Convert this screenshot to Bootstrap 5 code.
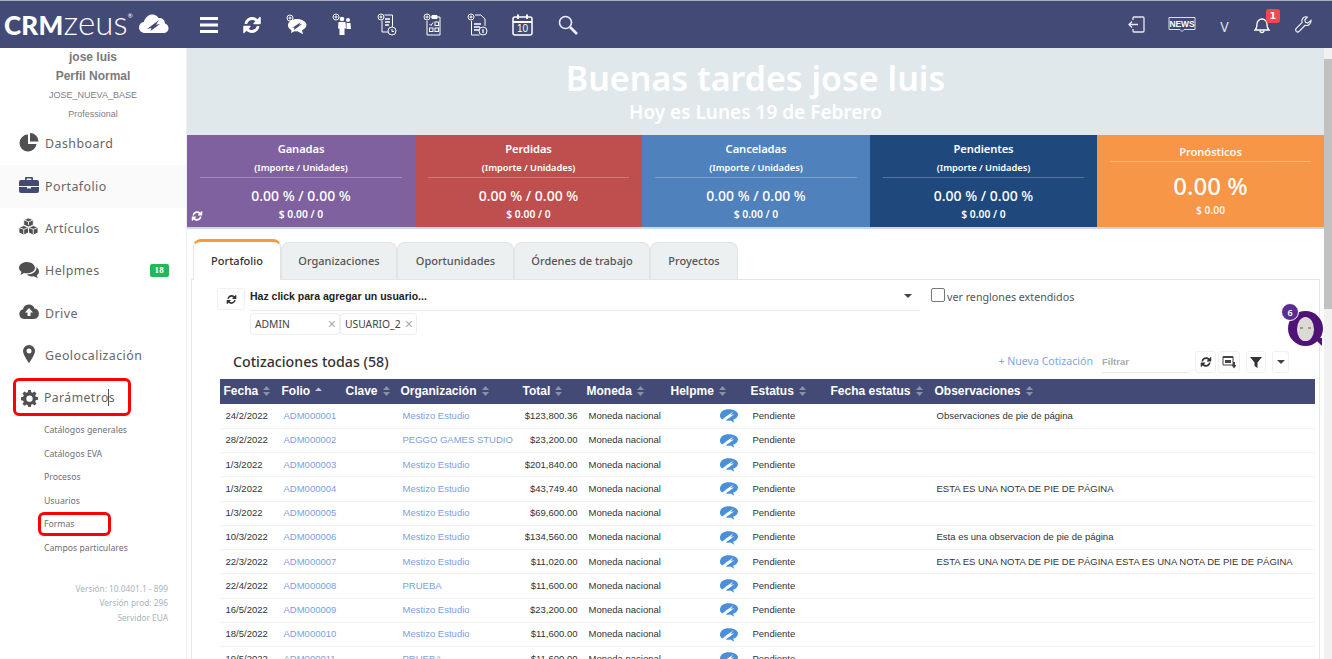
<!DOCTYPE html>
<html lang="es">
<head>
<meta charset="utf-8">
<title>CRM Zeus</title>
<link href="https://cdn.jsdelivr.net/npm/bootstrap@5.3.0/dist/css/bootstrap.min.css" rel="stylesheet">
<style>
html,body{height:100%;overflow:hidden;background:#fff}
body{font-family:"Noto Sans",sans-serif;color:#555}
.z-app{height:659px;display:flex;flex-direction:column;position:relative;overflow:hidden}
.z-top{height:48px;flex:none;background:#434a75;border-top:1px solid #a9acbd;padding:0 8px 0 0;flex-wrap:nowrap}
.z-brand{width:187px;height:47px;flex:none;display:flex;align-items:center;padding-left:4px;color:#fff;font-family:"Lato",sans-serif;font-size:26px;line-height:1;margin:0}
.z-brand b{font-weight:900;letter-spacing:.2px}.z-brand span{font-weight:300;font-size:33px;letter-spacing:.2px;margin-top:-5px;margin-left:0}
.z-brand sup{font-size:6px;top:-1.500em;position:relative;margin-left:0;width:6px}
.z-brand svg{margin-left:3px;margin-top:-4px}
.z-ico{width:45.2px;height:47px;display:flex;align-items:center;justify-content:center;color:#fff;flex:none}
.z-ico svg{display:block}
.z-r{width:42px;position:relative}
.z-v{font-size:14px;color:#dfe1ea;margin-top:3px}
.z-not{position:absolute;left:24px;top:8px;background:#f2494f;color:#fff;font:700 9px/14px "DejaVu Sans",sans-serif;width:14px;height:14px;text-align:center;border-radius:3px;padding:0}
.z-body{display:flex;flex:1;min-height:0}
.z-side{width:187px;flex:none;border-right:1px solid #eceff1;background:#fff}
.z-prof{height:75px;text-align:center;font-family:"Liberation Sans",sans-serif;color:#7a7a7a;line-height:19px}
.z-prof b{display:block;font-size:12px}
.z-prof i{display:block;font-style:normal;font-size:9px;color:#808080}
.z-nav{flex-direction:column;flex-wrap:nowrap}
.z-nav .nav-link{height:42.3px;display:flex;align-items:center;color:#666;font-size:12.400px;letter-spacing:.45px;padding:1px 17px 0 19px;position:relative}
.z-nav .z-act{background:#fafafa}
.z-nav svg{width:20px;height:20px;margin-right:6px;flex:none;color:#505050;margin-top:-4px}
.z-green{margin-left:auto;background:#25b956;color:#fff;font:700 9px/11px "Liberation Serif",serif;padding:1px 5px;border-radius:2px;margin-top:-3px;letter-spacing:.2px}
.z-sub{list-style:none;margin:0;padding:0 0 0 44px}
.z-sub li{height:23.6px;line-height:23.6px;font-size:8.700px;color:#6c6f7b;white-space:nowrap}
.z-ver{text-align:right;padding:21px 18px 0 0;font-size:8.300px;line-height:14.500px;color:#a9b4bb}
.z-main{flex:1;min-width:0;display:flex;flex-direction:column}
.z-greet{height:87px;flex:none;background:#e1e8eb;color:#fff;text-align:center;padding-top:8px}
.z-greet h1{font-size:34px;line-height:44px;font-weight:600;margin:0}
.z-greet p{font-size:19px;line-height:24px;margin:0;font-weight:600}
.z-kpis{display:grid;grid-template-columns:228px 227px 228px 227px 227px;height:94px;flex:none;border-bottom:2px solid #ced8de}
.z-kpi{color:#fff;text-align:center;padding:5px 13px 0;height:92px;position:relative;line-height:1.2}
.z-k1{background:#8061a0}.z-k2{background:#bf4f4f}.z-k3{background:#4f81bd}.z-k4{background:#1f497d}.z-k5{background:#f79646;padding-top:8px}
.z-kt{font-size:11.200px;font-weight:600;line-height:18px;letter-spacing:-.1px}
.z-ks{font-size:9.300px;font-weight:600;line-height:20px;border-bottom:1px solid rgba(255,255,255,.25);height:20px;margin-bottom:8px;letter-spacing:-.05px}
.z-k5 .z-kt{border-bottom:1px solid rgba(255,255,255,.35);height:19px;margin-bottom:8px;opacity:.95}
.z-kb{font-size:14px;font-weight:500;line-height:20px}
.z-k5 .z-kb{font-size:24px;line-height:34px;margin-top:-1px}
.z-kn{font-size:10.300px;font-weight:600;line-height:16px}
.z-k5 .z-kn{margin-top:-3px;line-height:20px;opacity:.9}
.z-kr{position:absolute;left:4px;bottom:5px;width:12px;height:12px;color:#fff}
.z-content{padding:10px 4px 0}
.z-tabs{--bs-nav-tabs-border-color:#dfe5e8;padding-left:2px;flex-wrap:nowrap;align-items:flex-end;border-bottom:1px solid #dfe5e8;margin:0}
.z-tabs .nav-link{height:37px;padding:0;display:flex;align-items:center;justify-content:center;background:#edf0f1;border:1px solid #dfe5e8;border-bottom:0;color:#555;font-size:11px;font-weight:500;border-radius:8px 8px 0 0;margin:0}
.z-tabs .nav-link.active{background:#fff;border-top:3px solid #f89a37;border-left-color:#e4e8ea;color:#333;margin-bottom:-1px;height:41px}
.z-w1{width:88px}.z-w2{width:116px}.z-w3{width:117px}.z-w4{width:136px}.z-w5{width:88px}
.z-panel{border:1px solid #e3e8eb;border-top:0;padding:8px 4px 0 25px;width:1129px;height:400px;overflow:hidden}
.z-rowu{display:flex;align-items:flex-start}
.z-rbtn{width:28px;height:22px;border:1px solid #eef0f2;border-radius:3px;display:flex;align-items:center;justify-content:center;color:#333;background:#fff;padding:0;flex:none}
.z-rbtn svg{width:11px;height:11px}
.z-sel{margin-left:5px;width:670px;flex:none}
.z-sel-in{height:23px;border-bottom:1px solid #e9ecee;display:flex;justify-content:space-between;align-items:center;font:700 10.500px "Liberation Sans",sans-serif;color:#222;padding:0 8px 7px 0}
.z-caret{width:0;height:0;border:4px solid transparent;border-top-color:#444;border-bottom:0;display:block}
.z-tags{display:flex;margin-top:2px}
.z-tag{height:22px;border:1px solid #eceff1;border-radius:3px;font-size:10.300px;color:#444;display:flex;align-items:center;justify-content:space-between;padding:0 3px 0 4px;line-height:1}
.z-tag span{color:#aaa;font-size:14px;font-family:"Liberation Sans",sans-serif}
.z-t1{width:90px}.z-t2{width:77px}
.z-chk{display:flex;align-items:flex-start;margin:0 0 0 11px;font-size:10.700px;color:#555;line-height:18px}
.z-chk .form-check-input{width:14px;height:14px;margin:0 2px 0 0;border:1px solid #777;border-radius:2px;flex:none}
.z-head{display:flex;align-items:center;height:25px;margin:14px 26px 0 0}
.z-head h2{font-size:14.200px;font-weight:500;color:#333;margin:0 0 0 16px;line-height:25px}
.z-new{margin-left:auto;color:#7ea6e0;font-size:10.600px;text-decoration:none;line-height:25px}
.z-fil{width:87px;height:21px;border:0;border-bottom:1px solid #e3e8eb;font:700 9.500px "Liberation Sans",sans-serif;margin:1px 6px 0 9px;color:#aaa;padding:0;background:transparent;display:flex;align-items:center;border-radius:0}
.z-fil::placeholder{color:#aaa}
.z-tb{height:22px;width:21px;border:1px solid #eef0f2;border-radius:3px;padding:0;display:flex;align-items:center;justify-content:center;background:#fff;color:#333;margin-right:2px}
.z-tb svg{width:12px;height:12px}
.z-gap{margin-left:4px}
.z-tablewrap{margin-top:5px;width:1095px;margin-left:2.500px}
.z-table{table-layout:fixed;width:1095px;margin:0;font-family:"Liberation Sans",sans-serif;font-size:9.500px;color:#333;--bs-table-bg:transparent}
.z-table th{background:#434a75;color:#fff;font-size:12px;font-weight:700;height:25px;padding:0 0 1px 4px;white-space:nowrap;border-bottom:0;vertical-align:middle}
.z-table td{height:24.250px;padding:0 0 0 6px;vertical-align:middle;white-space:nowrap;border-bottom:1px solid #f0f1f2;color:#333;overflow:visible}
.z-table a:not([href]):not([class]){color:#7a9fe3;text-decoration:none}
.z-table td.z-tot{text-align:right;padding:0 5px 0 0}
.z-table td.z-hlp{text-align:right;padding:0 9px 0 0}
.z-hlp svg{width:18px;height:14px;display:inline-block;vertical-align:middle}
.z-so{display:inline-block;width:7px;height:10px;margin-left:5px;vertical-align:-1px;opacity:.55}
.z-so.z-up{opacity:.8}
.z-scroll{width:8px;flex:none;background:#f1f1f1;position:relative}
.z-thumb{position:absolute;top:11px;left:0;right:0;height:250px;background:#c1c1c1}
.z-redb{position:absolute;border:3px solid #f00;border-radius:6px;pointer-events:none}
.z-red1{left:13px;top:378px;width:118px;height:38px}
.z-red2{left:38px;top:512px;width:73px;height:24px}
.z-cursor{position:absolute;left:108px;top:389px;width:1px;height:17px;background:#555}
.z-bot{position:absolute;left:1288px;top:311px;width:35px;height:35px;border-radius:50%;background:#4f1377;display:flex;align-items:center;justify-content:center}
.z-bot:after{content:"";position:absolute;right:1px;bottom:0;border:4px solid transparent;border-top-color:#4f1377;border-right-color:#4f1377}
.z-face{width:17px;height:24px;border-radius:50% 50% 48% 48%;background:#dcdad5;position:relative}
.z-face:before{content:"";position:absolute;left:3px;right:3px;top:10px;height:2px;border-left:3px solid #999;border-right:3px solid #999}
.z-botn{position:absolute;left:1281px;top:303px;width:18px;height:18px;border-radius:50%;background:#5c2d91;border:1px solid #fff;color:#fff;font-size:9px;font-weight:600;display:flex;align-items:center;justify-content:center;padding:0;z-index:2}
</style>
</head>
<body>
<svg width="0" height="0" class="position-absolute">
<defs>
<symbol id="sync" viewBox="0 0 24 24"><path fill="currentColor" d="M3.200 10.200C4 5.600 7.700 2.400 12.200 2.400c2.500 0 4.700 1 6.400 2.600l2.600-2.600c.5-.5 1.300-.1 1.300.6v7.200c0 .5-.4.9-.9.9h-7.200c-.7 0-1.100-.8-.6-1.300l2.200-2.200c-1-.9-2.400-1.500-3.800-1.500-2.800 0-5.100 1.800-5.900 4.400-.1.2-.3.4-.6.4H3.600c-.3 0-.5-.3-.4-.7zM20.800 13.800c-.8 4.600-4.500 7.800-9 7.800-2.500 0-4.700-1-6.400-2.600L2.800 21.600c-.5.5-1.300.1-1.300-.6v-7.200c0-.5.4-.9.9-.9h7.200c.7 0 1.100.8.6 1.300l-2.200 2.200c1 .9 2.400 1.500 3.800 1.500 2.800 0 5.100-1.800 5.900-4.400.1-.2.3-.4.6-.4h2.100c.3 0 .5.3.4.7z"/></symbol>
<symbol id="hlp" viewBox="0 0 24 18"><path fill="#4a90d9" d="M11 0C5 0 .5 3 0 8c-.3 2.500 1 4.500 3 5.500L10 9l-2 6c2 .5 4 .5 6 0l5 3-1.500-4c3.500-1 6.500-3.500 6.500-7C24 2.500 17 0 11 0z"/><path fill="#fff" d="M18 3 4.500 12l4.500-2-1 4.500L19 6.500l-5 1.300z"/></symbol>
<symbol id="sortb" viewBox="0 0 7 10"><path fill="#c9cbd6" d="M3.500 0 7 4H0zM3.500 10 0 6h7z"/></symbol>
<symbol id="sortu" viewBox="0 0 7 10"><path fill="#e6e7ee" d="M3.500 1.500 7 5H0z"/></symbol>
</defs>
</svg>
<div class="z-app">
  <nav class="navbar z-top d-flex justify-content-start">
    <a class="z-brand text-decoration-none"><b>CRM</b><span>zeus</span><sup>®</sup>
      <svg width="33" height="22" viewBox="0 0 31 22"><path fill="#fff" d="M7 21C3.500 21 1 18.500 1 15.500c0-2.800 2-5 4.800-5.400C7 6 10 3 13.500 2.500c3-.5 5.500 1 7 3.500 4-.5 6.500 2.500 6.500 5.500 2.200.7 3.500 2.500 3.500 4.700 0 2.800-2.200 4.800-5 4.800z"/><path fill="#434a75" d="M21 8 9 17l4.500-1-1 3 9.500-7-4 .8z"/></svg>
    </a>
    <div class="z-ico"><svg width="19" height="16" viewBox="0 0 19 16"><path fill="#fff" d="M0 0h18v3H0zM0 6.500h18v3H0zM0 13h18v3H0z"/></svg></div>
    <div class="z-ico" style="margin-left:-3px"><svg width="20" height="20"><use href="#sync"/></svg></div>
    <div class="z-ico"><svg width="24" height="22" viewBox="0 0 24 22"><circle cx="5" cy="4" r="3" fill="none" stroke="#fff" stroke-width="1"/><path stroke="#fff" d="M3.500 4h3M5 2.500v3"/><path fill="#fff" d="M12 5c-5 0-9 2.500-9 6.500 0 2 1.500 3.700 3.500 4.700L6 19l3.500-1.700c1 .2 2 .2 3 0l5.500 3-1-4c2.500-1 4.500-3 4.500-5.500C21 7.500 17 5 12 5z"/><path fill="#434a75" d="M16 8 7 14l2.500-.5-.5 2.500 8-6-3 .5z"/></svg></div>
    <div class="z-ico"><svg width="22" height="23" viewBox="0 0 22 23"><circle cx="5" cy="4" r="3" fill="none" stroke="#fff"/><path stroke="#fff" d="M3.500 4h3M5 2.500v3"/><g fill="#fff"><circle cx="11" cy="6" r="2.300"/><circle cx="17" cy="7" r="2"/><path d="M7.500 9h7l.5 6.500h-1.500V22h-5v-6.500H7zM15.500 10h4l.5 6h-4.500z"/></g></svg></div>
    <div class="z-ico"><svg width="20" height="23" viewBox="0 0 20 23" fill="none" stroke="#fff"><circle cx="4" cy="4" r="3"/><path d="M2.500 4h3M4 2.500v3M7.500 2h8v12M5 7.500V19h6"/><path d="M8 6h5M8 9h5M8 12h4" stroke-width="1.300"/><circle cx="15" cy="18" r="4"/><path d="M15 16v2.500h2"/></svg></div>
    <div class="z-ico"><svg width="20" height="23" viewBox="0 0 20 23" fill="none" stroke="#fff"><circle cx="4" cy="4" r="3"/><path d="M2.500 4h3M4 2.500v3M8 4h9v18H4V8"/><path fill="#fff" d="M9 2.500h5v3H9z"/><rect x="6.500" y="15" width="3.500" height="3.500"/><rect x="12" y="15" width="3.500" height="3.500"/><path d="M6.500 11l1.500 1.500 2-3"/><rect x="12" y="9" width="3.500" height="3.500"/></svg></div>
    <div class="z-ico"><svg width="21" height="23" viewBox="0 0 21 23" fill="none" stroke="#fff"><circle cx="4" cy="4" r="3"/><path d="M2.500 4h3M4 2.500v3M8 2h6l4 4v7M4.500 8v14h8"/><path d="M7 11h7M7 14h6M7 17h5" stroke-width="1.400"/><circle cx="16" cy="18" r="4"/><path d="M16 16v4" stroke-width="1.300"/></svg></div>
    <div class="z-ico"><svg width="21" height="22" viewBox="0 0 21 22" fill="none" stroke="#fff" stroke-width="1.500"><rect x="1" y="3" width="19" height="18" rx="2"/><path d="M1 8h19" stroke-width="2"/><path d="M6 .5V5M15 .5V5" stroke-width="2"/><text x="10.500" y="18" fill="#fff" stroke="none" font-size="10" font-family="Liberation Sans" text-anchor="middle">10</text></svg></div>
    <div class="z-ico"><svg width="20" height="20" viewBox="0 0 20 20" fill="none" stroke="#eef" ><circle cx="7.500" cy="7.500" r="6" stroke-width="1.600"/><path d="M12 12l7 7" stroke-width="2.600"/></svg></div>
    <div class="d-flex ms-auto align-items-center">
      <div class="z-ico z-r"><svg width="17" height="17" viewBox="0 0 17 17" fill="none" stroke="#e8e9f0" stroke-width="1.300"><path d="M5 4V2a1 1 0 0 1 1-1h9a1 1 0 0 1 1 1v13a1 1 0 0 1-1 1H6a1 1 0 0 1-1-1v-2"/><path d="M1 8.500h9M4 5.500l-3 3 3 3"/></svg></div>
      <div class="z-ico z-r" style="width:50px"><svg width="28" height="17" viewBox="0 0 28 17"><path fill="none" stroke="#dfe1ea" d="M1 1.500h26v12H16l-2 2-2-2H1z"/><text x="14" y="11" fill="#fff" font-family="Liberation Sans" font-weight="700" font-size="8.400" text-anchor="middle">NEWS</text></svg></div>
      <div class="z-ico z-r" style="width:35px"><span class="z-v">V</span></div>
      <div class="z-ico z-r" style="width:40px"><svg width="16" height="18" viewBox="0 0 16 18" fill="none" stroke="#fff" stroke-width="1.300"><path d="M1 14c2-1.500 2-3 2-6a5 5 0 0 1 10 0c0 3 0 4.500 2 6z"/><path d="M6 14.500a2 2 0 0 0 4 0"/></svg><span class="badge z-not">1</span></div>
      <div class="z-ico z-r" style="width:42px"><svg width="17" height="17" viewBox="0 0 17 17" fill="none" stroke="#eceef4" stroke-width="1.200"><path d="M16 4.500 12.800 7 10.500 6.300 9.800 4 12.300 1.100C10 .2 7.500 1.500 7 3.800c-.2 1-.1 1.800.2 2.600L1.300 12.400c-.8.800-.8 2 0 2.900.8.800 2 .8 2.800 0l6-6c2.800.9 6.200-1.500 5.900-4.800z"/></svg></div>
    </div>
  </nav>
  <div class="z-body">
    <aside class="z-side">
      <div class="z-prof"><b>jose luis</b><b>Perfil Normal</b><i>JOSE_NUEVA_BASE</i><i>Professional</i></div>
      <nav class="nav z-nav">
        <a class="nav-link"><svg viewBox="0 0 20 20"><path fill="currentColor" d="M9 1.500a8.500 8.500 0 1 0 8.500 9.500H9zM11 0v8.500h8.500A8.500 8.500 0 0 0 11 0z"/></svg>Dashboard</a>
        <a class="nav-link z-act"><svg viewBox="0 0 20 20"><path fill="#434a75" d="M7 2h6a1 1 0 0 1 1 1v2h4a2 2 0 0 1 2 2v4H0V7a2 2 0 0 1 2-2h4V3a1 1 0 0 1 1-1zm.700 1.500V5h4.600V3.500zM0 12h8v1.500h4V12h8v4a2 2 0 0 1-2 2H2a2 2 0 0 1-2-2z"/></svg>Portafolio</a>
        <a class="nav-link" style="padding-left:18px"><svg viewBox="0 0 22 20" style="width:21px;margin-right:6px"><g fill="currentColor" stroke="#fff" stroke-width=".9"><path d="M11 .5l5 2v5.500l-5 2-5-2V2.500z"/><path d="M6 8.500l5 2v5.500l-5 2.500L1 16v-5.500z"/><path d="M16 8.500l5 2v5.500l-5 2.500-5-2.500v-5.500z"/><path fill="none" d="M6 2.500l5 2 5-2M1 10.500l5 2 5-2 5 2 5-2M11 4.500V8M6 12.500V18M16 12.500V18"/></g></svg>Artículos</a>
        <a class="nav-link"><svg viewBox="0 0 20 20"><path fill="currentColor" d="M8 2C3.600 2 0 4.600 0 7.800c0 1.700 1 3.200 2.500 4.200L1.500 15l3.500-2c1 .2 2 .3 3 .3 4.400 0 8-2.500 8-5.500S12.400 2 8 2z"/><path fill="currentColor" d="M17.500 7.500c.1 3.800-4 7-9 7H7.600C9 15.700 11 16.500 13 16.500c.6 0 1.200-.1 1.800-.2l4 2-1-3c1.300-.9 2.200-2.200 2.200-3.800 0-1.800-1-3.400-2.500-4.500z"/></svg>Helpmes<span class="badge z-green">18</span></a>
        <a class="nav-link"><svg viewBox="0 0 20 20"><path fill="currentColor" d="M5 17a5 5 0 0 1-1-9.800A6 6 0 0 1 15.500 6.500 5.300 5.300 0 0 1 15 17z"/><path fill="#fff" d="M10 6l4 4.500h-2.500V14h-3v-3.500H6z"/></svg>Drive</a>
        <a class="nav-link"><svg viewBox="0 0 20 20"><path fill="currentColor" fill-rule="evenodd" d="M10 1a6 6 0 0 0-6 6c0 4 6 12 6 12s6-8 6-12a6 6 0 0 0-6-6zm0 3.500a2.500 2.500 0 1 1 0 5 2.500 2.500 0 0 1 0-5z"/></svg>Geolocalización</a>
        <a class="nav-link" style="font-size:12.200px;padding-left:21px"><svg viewBox="0 0 20 20" style="width:17px;height:17px;margin-right:6px;margin-top:0"><path fill="currentColor" fill-rule="evenodd" d="M8.500 0h3l.5 2.600 1.700.7L16 1.800 18.200 4l-1.500 2.300.7 1.700 2.600.5v3l-2.600.5-.7 1.700 1.500 2.200-2.200 2.200-2.300-1.500-1.700.7-.5 2.700h-3L8 17.800l-1.700-.7L4 18.600 1.800 16.400l1.500-2.200-.7-1.700L0 12V8.500l2.600-.5.7-1.700L1.800 4 4 1.800l2.300 1.500L8 2.600zM10 6.500a3.700 3.700 0 1 0 0 7.400 3.700 3.700 0 0 0 0-7.400z"/></svg>Parámetros</a>
      </nav>
      <ul class="z-sub">
        <li>Catálogos generales</li><li>Catálogos EVA</li><li>Procesos</li><li>Usuarios</li><li>Formas</li><li>Campos particulares</li>
      </ul>
      <div class="z-ver">Versión: 10.0401.1 - 899<br>Versión prod: 296<br>Servidor EUA</div>
    </aside>
    <main class="z-main">
      <div class="z-greet"><h1>Buenas tardes jose luis</h1><p>Hoy es Lunes 19 de Febrero</p></div>
      <div class="z-kpis">
        <div class="z-kpi z-k1"><div class="z-kt">Ganadas</div><div class="z-ks">(Importe / Unidades)</div><div class="z-kb">0.00 % / 0.00 %</div><div class="z-kn">$ 0.00 / 0</div><svg class="z-kr"><use href="#sync"/></svg></div>
        <div class="z-kpi z-k2"><div class="z-kt">Perdidas</div><div class="z-ks">(Importe / Unidades)</div><div class="z-kb">0.00 % / 0.00 %</div><div class="z-kn">$ 0.00 / 0</div></div>
        <div class="z-kpi z-k3"><div class="z-kt">Canceladas</div><div class="z-ks">(Importe / Unidades)</div><div class="z-kb">0.00 % / 0.00 %</div><div class="z-kn">$ 0.00 / 0</div></div>
        <div class="z-kpi z-k4"><div class="z-kt">Pendientes</div><div class="z-ks">(Importe / Unidades)</div><div class="z-kb">0.00 % / 0.00 %</div><div class="z-kn">$ 0.00 / 0</div></div>
        <div class="z-kpi z-k5"><div class="z-kt">Pronósticos</div><div class="z-kb">0.00 %</div><div class="z-kn">$ 0.00</div></div>
      </div>
      <div class="z-content">
        <ul class="nav nav-tabs z-tabs">
          <li class="nav-item"><a class="nav-link active z-w1">Portafolio</a></li>
          <li class="nav-item"><a class="nav-link z-w2">Organizaciones</a></li>
          <li class="nav-item"><a class="nav-link z-w3">Oportunidades</a></li>
          <li class="nav-item"><a class="nav-link z-w4">Órdenes de trabajo</a></li>
          <li class="nav-item"><a class="nav-link z-w5">Proyectos</a></li>
        </ul>
        <div class="z-panel">
          <div class="z-rowu">
            <button class="btn z-rbtn" type="button"><svg><use href="#sync"/></svg></button>
            <div class="z-sel">
              <div class="z-sel-in">Haz click para agregar un usuario...<i class="z-caret"></i></div>
              <div class="z-tags"><div class="z-tag z-t1">ADMIN<span>×</span></div><div class="z-tag z-t2">USUARIO_2<span>×</span></div></div>
            </div>
            <label class="z-chk"><input class="form-check-input" type="checkbox">ver renglones extendidos</label>
          </div>
          <div class="z-head">
            <h2>Cotizaciones todas (58)</h2>
            <a class="z-new">+ Nueva Cotización</a>
            <input class="form-control z-fil" placeholder="Filtrar">
            <button class="btn z-tb" type="button"><svg><use href="#sync"/></svg></button>
            <button class="btn z-tb" type="button" style="width:22px"><svg viewBox="0 0 14 14" style="width:14px;height:14px"><path fill="none" stroke="#444" d="M1 1.500h10v8.500H1z"/><path fill="#444" d="M1 1h10v2H1zM3 5h6v3H3zM11 7h2v3h1.500L12 13.500 9.500 10H11z"/></svg></button>
            <button class="btn z-tb z-gap" type="button" style="width:20px"><svg viewBox="0 0 12 12"><path fill="#333" d="M0 1h12L7.500 6.500V12L4.500 10V6.500z"/></svg></button>
            <button class="btn z-tb z-gap" type="button" style="width:17px;margin-right:0"><i class="z-caret"></i></button>
          </div>
          <div class="z-tablewrap">
            <table class="table z-table">
              <colgroup><col style="width:58px"><col style="width:64px"><col style="width:55px"><col style="width:122px"><col style="width:64px"><col style="width:84px"><col style="width:80px"><col style="width:80px"><col style="width:104px"><col></colgroup>
              <thead><tr>
                <th>Fecha<svg class="z-so"><use href="#sortb"/></svg></th>
                <th>Folio<svg class="z-so z-up"><use href="#sortu"/></svg></th>
                <th>Clave<svg class="z-so"><use href="#sortb"/></svg></th>
                <th>Organización<svg class="z-so"><use href="#sortb"/></svg></th>
                <th>Total<svg class="z-so"><use href="#sortb"/></svg></th>
                <th>Moneda<svg class="z-so"><use href="#sortb"/></svg></th>
                <th>Helpme<svg class="z-so"><use href="#sortb"/></svg></th>
                <th>Estatus<svg class="z-so"><use href="#sortb"/></svg></th>
                <th>Fecha estatus<svg class="z-so"><use href="#sortb"/></svg></th>
                <th>Observaciones<svg class="z-so"><use href="#sortb"/></svg></th>
              </tr></thead>
              <tbody>
                <tr><td>24/2/2022</td><td><a>ADM000001</a></td><td></td><td><a>Mestizo Estudio</a></td><td class="z-tot">$123,800.36</td><td>Moneda nacional</td><td class="z-hlp"><svg><use href="#hlp"/></svg></td><td>Pendiente</td><td></td><td>Observaciones de pie de página</td></tr>
                <tr><td>28/2/2022</td><td><a>ADM000002</a></td><td></td><td><a>PEGGO GAMES STUDIO</a></td><td class="z-tot">$23,200.00</td><td>Moneda nacional</td><td class="z-hlp"><svg><use href="#hlp"/></svg></td><td>Pendiente</td><td></td><td></td></tr>
                <tr><td>1/3/2022</td><td><a>ADM000003</a></td><td></td><td><a>Mestizo Estudio</a></td><td class="z-tot">$201,840.00</td><td>Moneda nacional</td><td class="z-hlp"><svg><use href="#hlp"/></svg></td><td>Pendiente</td><td></td><td></td></tr>
                <tr><td>1/3/2022</td><td><a>ADM000004</a></td><td></td><td><a>Mestizo Estudio</a></td><td class="z-tot">$43,749.40</td><td>Moneda nacional</td><td class="z-hlp"><svg><use href="#hlp"/></svg></td><td>Pendiente</td><td></td><td>ESTA ES UNA NOTA DE PIE DE PÁGINA</td></tr>
                <tr><td>1/3/2022</td><td><a>ADM000005</a></td><td></td><td><a>Mestizo Estudio</a></td><td class="z-tot">$69,600.00</td><td>Moneda nacional</td><td class="z-hlp"><svg><use href="#hlp"/></svg></td><td>Pendiente</td><td></td><td></td></tr>
                <tr><td>10/3/2022</td><td><a>ADM000006</a></td><td></td><td><a>Mestizo Estudio</a></td><td class="z-tot">$134,560.00</td><td>Moneda nacional</td><td class="z-hlp"><svg><use href="#hlp"/></svg></td><td>Pendiente</td><td></td><td>Esta es una observacion de pie de página</td></tr>
                <tr><td>22/3/2022</td><td><a>ADM000007</a></td><td></td><td><a>Mestizo Estudio</a></td><td class="z-tot">$11,020.00</td><td>Moneda nacional</td><td class="z-hlp"><svg><use href="#hlp"/></svg></td><td>Pendiente</td><td></td><td>ESTA ES UNA NOTA DE PIE DE PÁGINA ESTA ES UNA NOTA DE PIE DE PÁGINA</td></tr>
                <tr><td>22/4/2022</td><td><a>ADM000008</a></td><td></td><td><a>PRUEBA</a></td><td class="z-tot">$11,600.00</td><td>Moneda nacional</td><td class="z-hlp"><svg><use href="#hlp"/></svg></td><td>Pendiente</td><td></td><td></td></tr>
                <tr><td>16/5/2022</td><td><a>ADM000009</a></td><td></td><td><a>Mestizo Estudio</a></td><td class="z-tot">$23,200.00</td><td>Moneda nacional</td><td class="z-hlp"><svg><use href="#hlp"/></svg></td><td>Pendiente</td><td></td><td></td></tr>
                <tr><td>18/5/2022</td><td><a>ADM000010</a></td><td></td><td><a>Mestizo Estudio</a></td><td class="z-tot">$11,600.00</td><td>Moneda nacional</td><td class="z-hlp"><svg><use href="#hlp"/></svg></td><td>Pendiente</td><td></td><td></td></tr>
                <tr><td>19/5/2022</td><td><a>ADM000011</a></td><td></td><td><a>PRUEBA</a></td><td class="z-tot">$11,600.00</td><td>Moneda nacional</td><td class="z-hlp"><svg><use href="#hlp"/></svg></td><td>Pendiente</td><td></td><td></td></tr>
              </tbody>
            </table>
          </div>
        </div>
      </div>
    </main>
    <div class="z-scroll"><div class="z-thumb"></div></div>
  </div>
  <div class="z-redb z-red1"></div>
  <div class="z-redb z-red2"></div>
  <div class="z-cursor"></div>
  <span class="badge z-botn">6</span>
  <div class="z-bot"><div class="z-face"></div></div>
</div>
<script src="https://cdn.jsdelivr.net/npm/bootstrap@5.3.0/dist/js/bootstrap.bundle.min.js"></script>
</body>
</html>
